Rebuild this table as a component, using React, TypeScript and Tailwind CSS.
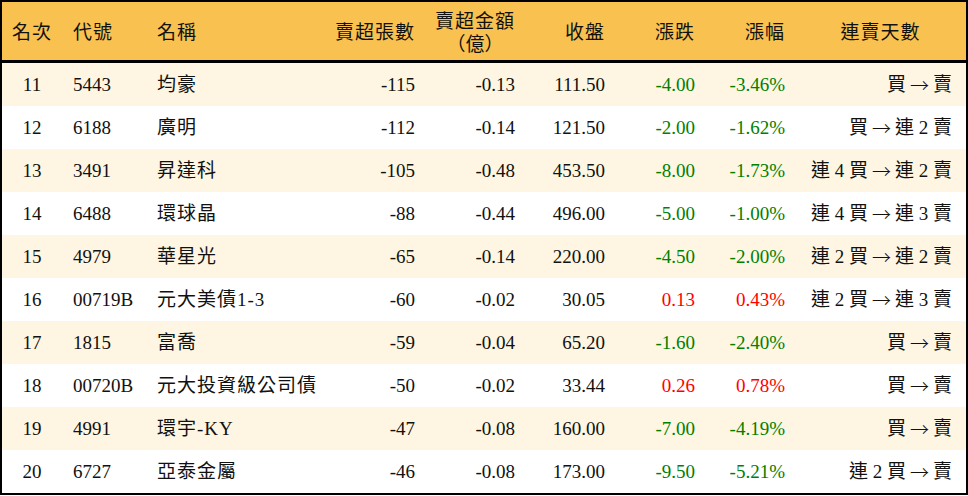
const FONT = "font-['Liberation_Serif','Noto_Sans_CJK_TC',serif]";

const COLS = "grid grid-cols-[60px_84px_179px_100px_100px_90px_90px_90px_171px]";

type Row = {
  rank: number;
  code: string;
  name: string;
  lots: number;
  amount: string;
  close: string;
  change: string;
  pct: string;
  streak: [string, string];
};

const ROWS: Row[] = [
  { rank: 11, code: "5443", name: "均豪", lots: -115, amount: "-0.13", close: "111.50", change: "-4.00", pct: "-3.46%", streak: ["買", "賣"] },
  { rank: 12, code: "6188", name: "廣明", lots: -112, amount: "-0.14", close: "121.50", change: "-2.00", pct: "-1.62%", streak: ["買", "連 2 賣"] },
  { rank: 13, code: "3491", name: "昇達科", lots: -105, amount: "-0.48", close: "453.50", change: "-8.00", pct: "-1.73%", streak: ["連 4 買", "連 2 賣"] },
  { rank: 14, code: "6488", name: "環球晶", lots: -88, amount: "-0.44", close: "496.00", change: "-5.00", pct: "-1.00%", streak: ["連 4 買", "連 3 賣"] },
  { rank: 15, code: "4979", name: "華星光", lots: -65, amount: "-0.14", close: "220.00", change: "-4.50", pct: "-2.00%", streak: ["連 2 買", "連 2 賣"] },
  { rank: 16, code: "00719B", name: "元大美債1-3", lots: -60, amount: "-0.02", close: "30.05", change: "0.13", pct: "0.43%", streak: ["連 2 買", "連 3 賣"] },
  { rank: 17, code: "1815", name: "富喬", lots: -59, amount: "-0.04", close: "65.20", change: "-1.60", pct: "-2.40%", streak: ["買", "賣"] },
  { rank: 18, code: "00720B", name: "元大投資級公司債", lots: -50, amount: "-0.02", close: "33.44", change: "0.26", pct: "0.78%", streak: ["買", "賣"] },
  { rank: 19, code: "4991", name: "環宇-KY", lots: -47, amount: "-0.08", close: "160.00", change: "-7.00", pct: "-4.19%", streak: ["買", "賣"] },
  { rank: 20, code: "6727", name: "亞泰金屬", lots: -46, amount: "-0.08", close: "173.00", change: "-9.50", pct: "-5.21%", streak: ["連 2 買", "賣"] },
];

export default function App() {
  return (
    <div className={`w-[968px] h-[496px] bg-white ${FONT} text-[19px] text-[#111]`}>
      <div className="border-2 border-black">
        {/* Header */}
        <div className={`${COLS} h-[61px] pt-[4px] bg-[#f9c150] border-b-[3px] border-black tracking-[1px]`}>
          <div className="flex items-center justify-center">名次</div>
          <div className="flex items-center pl-[11px]">代號</div>
          <div className="flex items-center pl-[11px]">名稱</div>
          <div className="flex items-center justify-end pr-[10px]">賣超張數</div>
          <div className="flex items-center justify-end pr-[10px]">
            <div className="text-center leading-[23px]">
              <div>賣超金額</div>
              <div className="tracking-[0px]">（億）</div>
            </div>
          </div>
          <div className="flex items-center justify-end pr-[10px]">收盤</div>
          <div className="flex items-center justify-end pr-[10px]">漲跌</div>
          <div className="flex items-center justify-end pr-[10px]">漲幅</div>
          <div className="flex items-center justify-center">連賣天數</div>
        </div>

        {/* Rows */}
        {ROWS.map((r, i) => {
          const up = !r.change.startsWith("-");
          const color = up ? "text-[#ff0000]" : "text-[#008000]";
          return (
            <div
              key={r.rank}
              className={`${COLS} h-[43px] pt-[2px] ${i % 2 === 0 ? "bg-[#fef6e2]" : "bg-white"}`}
            >
              <div className="flex items-center justify-center">{r.rank}</div>
              <div className="flex items-center pl-[11px]">{r.code}</div>
              <div className="flex items-center pl-[11px] tracking-[1px] whitespace-nowrap">{r.name}</div>
              <div className="flex items-center justify-end pr-[10px]">{r.lots}</div>
              <div className="flex items-center justify-end pr-[10px]">{r.amount}</div>
              <div className="flex items-center justify-end pr-[10px]">{r.close}</div>
              <div className={`flex items-center justify-end pr-[10px] ${color}`}>{r.change}</div>
              <div className={`flex items-center justify-end pr-[10px] ${color}`}>{r.pct}</div>
              <div className="flex items-center justify-end pr-[14px] whitespace-pre">
                <span>{r.streak[0]}</span>
                <span className="mx-[4px] font-['Noto_Sans_CJK_TC',sans-serif] font-light">→</span>
                <span>{r.streak[1]}</span>
              </div>
            </div>
          );
        })}
      </div>
    </div>
  );
}
